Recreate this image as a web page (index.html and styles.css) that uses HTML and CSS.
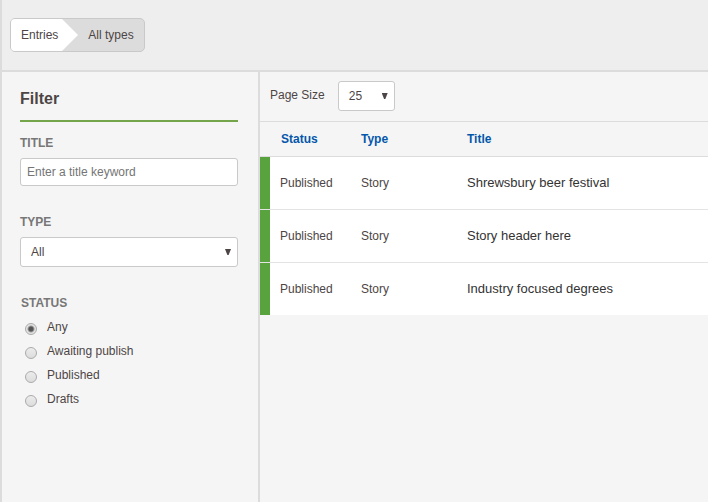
FILE: index.html
```html
<!DOCTYPE html>
<html lang="en">
<head>
<meta charset="utf-8">
<meta name="viewport" content="width=device-width, initial-scale=1">
<title>Entries</title>
<link rel="stylesheet" href="styles.css">
</head>
<body>
<header class="topbar">
  <nav class="breadcrumb" aria-label="Breadcrumb">
    <a class="crumb crumb-root" href="#entries">Entries</a>
    <svg class="crumb-arrow" viewBox="0 0 16 32" aria-hidden="true"><path d="M0 0L16 16L0 32Z"/></svg>
    <a class="crumb" href="#all">All types</a>
  </nav>
</header>
<div class="layout">
  <aside class="sidebar">
    <h2 class="sidebar-title">Filter</h2>
    <form>
      <div class="field">
        <label class="field-label" for="title">TITLE</label>
        <input class="control text-input" id="title" type="text" placeholder="Enter a title keyword">
      </div>
      <div class="field">
        <label class="field-label" for="type">TYPE</label>
        <div class="select-wrap">
          <select class="control select" id="type"><option>All</option></select>
        </div>
      </div>
      <fieldset class="status">
        <legend class="field-label">STATUS</legend>
        <label class="option"><input type="radio" name="status" checked><span>Any</span></label>
        <label class="option"><input type="radio" name="status"><span>Awaiting publish</span></label>
        <label class="option"><input type="radio" name="status"><span>Published</span></label>
        <label class="option"><input type="radio" name="status"><span>Drafts</span></label>
      </fieldset>
    </form>
  </aside>
  <main class="content">
    <div class="toolbar">
      <label for="size">Page Size</label>
      <div class="select-wrap">
        <select class="control select select-size" id="size"><option>25</option></select>
      </div>
    </div>
    <table class="entries">
      <thead>
        <tr><th class="col-status"><a href="#status">Status</a></th><th class="col-type"><a href="#type">Type</a></th><th><a href="#title">Title</a></th></tr>
      </thead>
      <tbody>
        <tr><td>Published</td><td>Story</td><td class="entry-title">Shrewsbury beer festival</td></tr>
        <tr><td>Published</td><td>Story</td><td class="entry-title">Story header here</td></tr>
        <tr><td>Published</td><td>Story</td><td class="entry-title">Industry focused degrees</td></tr>
      </tbody>
    </table>
  </main>
</div>
</body>
</html>
```
FILE: styles.css
```css
* {
  box-sizing: border-box;
}

body {
  display: flex;
  flex-direction: column;
  min-height: 100vh;
  margin: 0;
  border-left: 2px solid #dcdcdc;
  background: #f5f5f5;
  color: #4d4545;
  font: 12px/16px "Liberation Sans", Arial, sans-serif;
}

a {
  color: inherit;
  text-decoration: none;
}

.topbar {
  display: flex;
  padding: 18px 8px;
  border-bottom: 2px solid #dcdcdc;
  background: #eee;
}

.breadcrumb {
  display: flex;
  overflow: hidden;
  border: 1px solid #c9c9c9;
  border-radius: 5px;
  background: #dcdcdc;
}

.crumb {
  padding: 8px 10px;
}

.crumb-root {
  padding-right: 4px;
  background: #fff;
}

.crumb-arrow {
  width: 16px;
  height: 32px;
  fill: #fff;
}

.layout {
  display: flex;
  flex: 1;
}

.sidebar {
  flex: 0 0 258px;
  padding: 17px 20px 16px 18px;
  border-right: 2px solid #dcdcdc;
}

.sidebar-title {
  margin: 0 0 13px;
  padding-bottom: 11px;
  border-bottom: 2px solid #74a54a;
  font-size: 16px;
  line-height: 20px;
}

.field {
  margin-bottom: 28px;
}

.field-label {
  display: block;
  margin-bottom: 7px;
  padding: 0;
  color: #777;
  font-weight: bold;
}

.control {
  display: block;
  width: 100%;
  border: 1px solid #c9c9c9;
  border-radius: 3px;
  background: #fff;
  color: #4d4545;
  font: inherit;
}

.text-input {
  height: 28px;
  padding: 0 6px;
}

.text-input::placeholder {
  color: #757575;
}

.select-wrap {
  position: relative;
}

.select-wrap::after {
  content: "";
  position: absolute;
  top: 12px;
  right: 7px;
  width: 6px;
  height: 6px;
  background: #4d4545;
  clip-path: polygon(0 0, 100% 0, 60% 100%, 40% 100%);
  pointer-events: none;
}

.select {
  height: 30px;
  padding: 0 10px;
  appearance: none;
}

.select-size {
  width: 57px;
}

.status {
  margin: 0;
  padding: 0;
  border: 0;
}

.status .field-label {
  margin-bottom: 8px;
  padding-left: 1px;
}

.option {
  display: flex;
  gap: 10px;
  height: 24px;
  padding-left: 5px;
}

.option input {
  width: 12px;
  height: 12px;
  margin: 4px 0 0;
  border: 1px solid #aaa;
  border-radius: 50%;
  background: linear-gradient(#ececec, #dcdcdc);
  appearance: none;
}

.option input:checked {
  background: radial-gradient(circle, #555 2px, #e4e4e4 4px);
}

.content {
  flex: 1;
  min-width: 0;
}

.toolbar {
  display: flex;
  gap: 13px;
  padding: 9px 10px 10px;
  border-bottom: 1px solid #dcdcdc;
}

.toolbar label {
  padding-top: 6px;
}

.entries {
  width: 100%;
  border-collapse: separate;
  border-spacing: 0;
  table-layout: fixed;
}

.entries th {
  height: 35px;
  padding: 0;
  border-bottom: 1px solid #dcdcdc;
  color: #0457ab;
  text-align: left;
}

.entries td {
  height: 53px;
  padding: 0;
  border-bottom: 1px solid #e4e4e4;
  background: #fff;
}

.entries tbody tr:last-child td {
  height: 52px;
  border-bottom: 0;
}

.entries .col-status {
  width: 101px;
  padding-left: 21px;
}

.entries .col-type {
  width: 106px;
}

.entries td:first-child {
  padding-left: 20px;
  background: linear-gradient(#58a33e, #58a33e) 0 0 / 10px 100% no-repeat padding-box #fff;
}

.entries .entry-title {
  color: #333;
  font-size: 13px;
}
```
